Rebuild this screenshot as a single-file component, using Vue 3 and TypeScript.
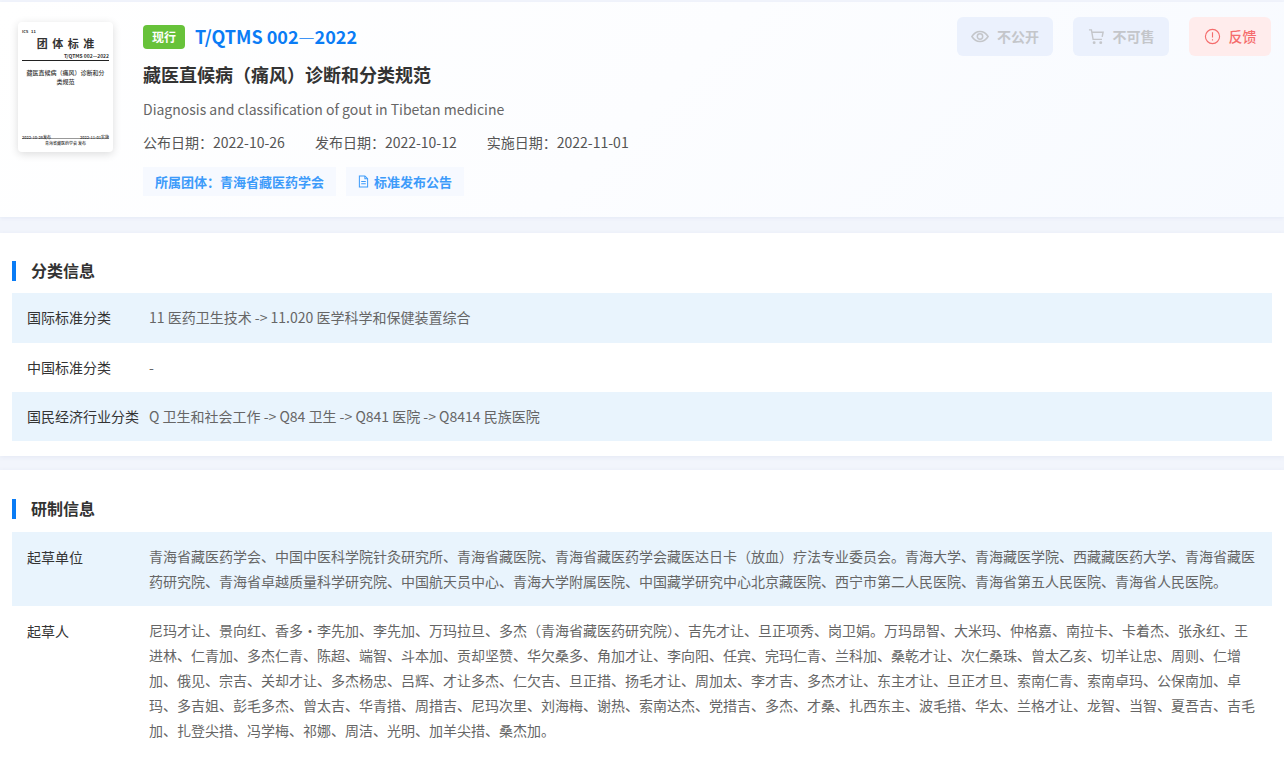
<script setup lang="ts">
interface InfoRow {
  label: string
  value: string
}

const dates = [
  { label: '公布日期', value: '2022-10-26' },
  { label: '发布日期', value: '2022-10-12' },
  { label: '实施日期', value: '2022-11-01' }
]

const classRows: InfoRow[] = [
  { label: '国际标准分类', value: '11 医药卫生技术 -> 11.020 医学科学和保健装置综合' },
  { label: '中国标准分类', value: '-' },
  { label: '国民经济行业分类', value: 'Q 卫生和社会工作 -> Q84 卫生 -> Q841 医院 -> Q8414 民族医院' }
]

const draftRows: InfoRow[] = [
  {
    label: '起草单位',
    value: '青海省藏医药学会、中国中医科学院针灸研究所、青海省藏医院、青海省藏医药学会藏医达日卡（放血）疗法专业委员会。青海大学、青海藏医学院、西藏藏医药大学、青海省藏医药研究院、青海省卓越质量科学研究院、中国航天员中心、青海大学附属医院、中国藏学研究中心北京藏医院、西宁市第二人民医院、青海省第五人民医院、青海省人民医院。'
  },
  {
    label: '起草人',
    value: '尼玛才让、景向红、香多・李先加、李先加、万玛拉旦、多杰（青海省藏医药研究院）、吉先才让、旦正项秀、岗卫娟。万玛昂智、大米玛、仲格嘉、南拉卡、卡着杰、张永红、王进林、仁青加、多杰仁青、陈超、端智、斗本加、贡却坚赞、华欠桑多、角加才让、李向阳、任宾、完玛仁青、兰科加、桑乾才让、次仁桑珠、曾太乙亥、切羊让忠、周则、仁增加、俄见、宗吉、关却才让、多杰杨忠、吕辉、才让多杰、仁欠吉、旦正措、扬毛才让、周加太、李才吉、多杰才让、东主才让、旦正才旦、索南仁青、索南卓玛、公保南加、卓玛、多吉姐、彭毛多杰、曾太吉、华青措、周措吉、尼玛次里、刘海梅、谢热、索南达杰、党措吉、多杰、才桑、扎西东主、波毛措、华太、兰格才让、龙智、当智、夏吾吉、吉毛加、扎登尖措、冯学梅、祁娜、周洁、光明、加羊尖措、桑杰加。'
  }
]
</script>

<template>
  <div class="page">
    <header class="head">
      <div class="cover">
        <div class="cover-ics">ICS &nbsp; 11</div>
        <div class="cover-title">团 体 标 准</div>
        <div class="cover-code">T/QTMS 002—2022</div>
        <div class="cover-name">藏医直候病（痛风）诊断和分类规范</div>
        <div class="cover-dates"><span>2022-10-26发布</span><span>2022-11-01实施</span></div>
        <div class="cover-org">青海省藏医药学会 发布</div>
      </div>
      <div class="head-main">
        <div class="code-line">
          <span class="status">现行</span>
          <span class="code">T/QTMS 002<span class="dash">—</span>2022</span>
        </div>
        <h1 class="name">藏医直候病（痛风）诊断和分类规范</h1>
        <p class="en-name">Diagnosis and classification of gout in Tibetan medicine</p>
        <div class="dates">
          <span v-for="d in dates" :key="d.label">{{ d.label }}：{{ d.value }}</span>
        </div>
        <div class="links">
          <span class="link">所属团体：青海省藏医药学会</span>
          <span class="link">
            <svg class="doc-icon" viewBox="0 0 12 14" width="11" height="13" fill="none" stroke="currentColor" stroke-width="1.1">
              <path d="M1.500 1h6l3 3v9h-9z" />
              <path d="M7.500 1v3h3M3.500 7h5M3.500 9.500h5" />
            </svg>
            标准发布公告
          </span>
        </div>
      </div>
      <div class="actions">
        <button class="act">
          <svg viewBox="0 0 20 14" width="18" height="13" fill="none" stroke="currentColor" stroke-width="1.700">
            <path d="M1 7c2.200-3.600 5.200-5.600 9-5.600s6.800 2 9 5.600c-2.200 3.600-5.200 5.600-9 5.600S3.200 10.600 1 7z" />
            <circle cx="10" cy="7" r="3" />
          </svg>
          不公开
        </button>
        <button class="act">
          <svg viewBox="0 0 18 18" width="17" height="17" fill="none" stroke="currentColor" stroke-width="1.500">
            <path d="M1 2h2.600l1.800 10h9.400M4 4.500h12l-1 5" />
            <circle cx="6.500" cy="15.500" r=".8" />
            <circle cx="13.500" cy="15.500" r=".8" />
          </svg>
          不可售
        </button>
        <button class="act act-red">
          <svg viewBox="0 0 18 18" width="17" height="17" fill="none" stroke="currentColor" stroke-width="1.200">
            <circle cx="9" cy="9" r="7.500" />
            <path d="M9 4.500v5.500M9 12v1.300" />
          </svg>
          反馈
        </button>
      </div>
    </header>

    <section class="card card-class">
      <h2 class="sec-title">分类信息</h2>
      <div v-for="row in classRows" :key="row.label" class="row row-short">
        <div class="row-label">{{ row.label }}</div>
        <div class="row-value">{{ row.value }}</div>
      </div>
    </section>

    <section class="card card-draft">
      <h2 class="sec-title">研制信息</h2>
      <div v-for="row in draftRows" :key="row.label" class="row row-long">
        <div class="row-label">{{ row.label }}</div>
        <div class="row-value">{{ row.value }}</div>
      </div>
    </section>
  </div>
</template>

<style>
html,
body {
  margin: 0;
  background: #fff;
}
</style>

<style scoped>
.page {
  height: 771px;
  overflow: hidden;
  box-sizing: border-box;
  padding-top: 2px;
  background: #f2f5fc;
  font-family: "Noto Sans CJK SC", "Noto Sans", sans-serif;
  color: #555;
}
.head {
  height: 215px;
  box-sizing: border-box;
  display: flex;
  padding: 15px 13px 0 18px;
  background: linear-gradient(135deg, #fff 0%, #fcfdff 50%, #f7faff 100%);
  box-shadow: 0 1px 4px rgba(60, 90, 160, 0.08);
}
.cover {
  width: 95px;
  height: 130px;
  margin-top: 5px;
  box-sizing: border-box;
  padding: 6px 4px 0;
  background: #fff;
  border-radius: 4px;
  box-shadow: 0 2px 8px rgba(0, 0, 0, 0.14);
  color: #333;
  display: flex;
  flex-direction: column;
}
.cover-ics {
  font-size: 4px;
  line-height: 6px;
  font-weight: 700;
}
.cover-title {
  margin-top: 1px;
  font-size: 11px;
  line-height: 16px;
  font-weight: 700;
  text-align: center;
  word-spacing: 2px;
}
.cover-code {
  margin-top: 1px;
  font-size: 5px;
  line-height: 8px;
  font-weight: 700;
  text-align: right;
  border-bottom: 1px solid #222;
}
.cover-name {
  margin-top: 7px;
  padding: 0 3px;
  font-size: 6px;
  line-height: 9px;
  font-weight: 500;
  text-align: center;
}
.cover-dates {
  margin-top: auto;
  display: flex;
  justify-content: space-between;
  font-size: 4px;
  line-height: 2px;
  font-weight: 500;
  border-bottom: 1px solid #999;
}
.cover-org {
  font-size: 4px;
  line-height: 8px;
  margin-bottom: 5px;
  font-weight: 500;
  text-align: center;
}
.head-main {
  margin: 5px 0 0 30px;
  flex: 1;
}
.code-line {
  display: flex;
  align-items: center;
  height: 30px;
}
.status {
  width: 42px;
  height: 24px;
  line-height: 24px;
  border-radius: 4px;
  background: #67c23a;
  color: #fff;
  font-size: 12px;
  font-weight: 700;
  text-align: center;
}
.code {
  margin-left: 10px;
  padding-bottom: 2px;
  color: #0a7cf5;
  font-size: 18px;
  line-height: 28px;
  font-weight: 700;
}
.dash {
  font-weight: 300;
}
.name {
  margin: 7px 0 0;
  font-size: 18px;
  line-height: 30px;
  font-weight: 700;
  color: #333;
}
.en-name {
  margin: 8px 0 0;
  font-size: 14px;
  line-height: 24px;
  color: #666;
}
.dates {
  margin-top: 9px;
  display: flex;
  gap: 30px;
  font-size: 14px;
  line-height: 24px;
}
.links {
  display: flex;
  gap: 10px;
  margin-top: 13px;
}
.link {
  display: flex;
  align-items: center;
  gap: 5px;
  height: 29px;
  padding: 0 12px;
  background: #f6f9ff;
  color: #3d9bfa;
  font-size: 13px;
  font-weight: 700;
}
.actions {
  display: flex;
  gap: 20px;
}
.act {
  display: flex;
  align-items: center;
  justify-content: center;
  gap: 8px;
  width: 96px;
  height: 39px;
  padding: 0 0 2px;
  border: 0;
  border-radius: 6px;
  background: #ebf1fd;
  color: #c4c6ca;
  font-family: inherit;
  font-size: 14px;
  font-weight: 700;
}
.act svg {
  margin-top: 2px;
}
.act-red {
  width: 82px;
  background: #ffecec;
  color: #f56c6c;
  font-weight: 500;
}
.card {
  box-sizing: border-box;
  background: #fff;
  padding: 0 12px;
  box-shadow: 0 1px 5px rgba(60, 80, 140, 0.08);
}
.card-class {
  height: 223px;
  margin-top: 16px;
  padding-top: 28px;
}
.card-draft {
  margin-top: 14px;
  padding-top: 29px;
  height: 301px;
}
.sec-title {
  height: 20px;
  margin: 0 0 12px;
  padding-left: 15px;
  border-left: 4px solid #0a7cf5;
  font-size: 16px;
  line-height: 18px;
  font-weight: 700;
  color: #333;
}
.card-draft .sec-title {
  margin-bottom: 13px;
}
.row {
  display: flex;
  font-size: 14px;
  box-sizing: border-box;
}
.row:nth-of-type(odd) {
  background: #e9f4fd;
}
.row-short {
  align-items: center;
  height: 49.5px;
}
.row-short:last-child {
  height: 49px;
}
.row-long {
  padding: 12px 0;
}
.row-long .row-label {
  padding-top: 1px;
}
.row-label {
  width: 137px;
  flex: none;
  padding-left: 15px;
  box-sizing: border-box;
  color: #333;
  line-height: 25px;
  white-space: nowrap;
}
.row-value {
  flex: 1;
  padding-right: 16px;
  line-height: 25px;
  color: #666;
}
</style>
